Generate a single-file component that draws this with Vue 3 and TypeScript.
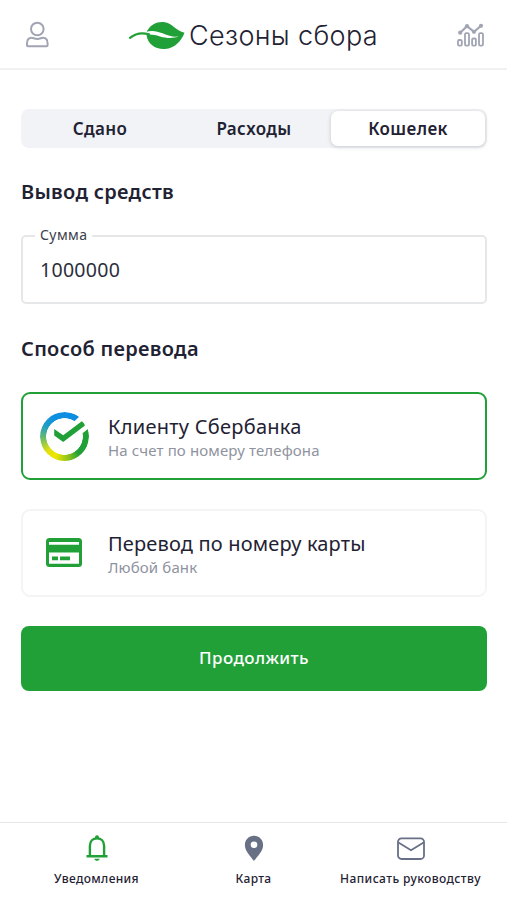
<script setup lang="ts">
import { ref } from 'vue'

type Method = 'sber' | 'card'

const tabs: string[] = ['Сдано', 'Расходы', 'Кошелек']
const activeTab = ref<string>('Кошелек')
const method = ref<Method>('sber')
const amount = ref<string>('1000000')
</script>

<template>
  <div class="screen">
    <header class="header">
      <svg class="user" width="24" height="28" viewBox="0 0 24 28" fill="none" stroke="#a1a5b3" stroke-width="2">
        <circle cx="12.300" cy="8" r="6.300" />
        <path d="M2 24.200v-1.800c0-3.600 2-5.600 4.700-5.600 1.700 0 2.800 1.100 5.600 1.100s3.900-1.100 5.600-1.100c2.700 0 4.700 2 4.700 5.600v1.800c0 .6-.4 1-1 1H3c-.6 0-1-.4-1-1z" />
      </svg>
      <div class="brand">
        <svg width="58" height="30" viewBox="0 0 58 30">
          <path d="M19 11C23 4 30 1 37 2.200c8 1.400 11 8.800 19.500 10.500-3 8-9.500 15.500-19.500 16.300-9.500.7-17-5-18.400-13.300z" fill="#21a038" />
          <path d="M17 12.200c6-2.200 11.500-1.500 17.500 1.100 6.500 2.800 10.500 3.700 16 3.200-6.500 2.200-12 1.600-18.500-.1-6-1.600-10-2.500-15-1.200z" fill="#fff" />
          <path d="M2 17.800C7.500 13.300 14 12.300 21 14.300" fill="none" stroke="#21a038" stroke-width="2.200" stroke-linecap="round" />
        </svg>
        <span class="brand-name">Сезоны сбора</span>
      </div>
      <svg class="stats" width="28" height="26" viewBox="0 0 28 26" fill="none" stroke="#a1a5b3" stroke-width="1.800">
        <path d="M3.200 9.700 10 3.200l7 5.600L24 2.800" stroke-width="2.100" />
        <g fill="#a1a5b3" stroke="none">
          <circle cx="3.200" cy="9.700" r="2.100" /><circle cx="10" cy="3.200" r="2.100" />
          <circle cx="17" cy="8.800" r="2.100" /><circle cx="24" cy="2.800" r="2.100" />
        </g>
        <rect x="1" y="17" width="3.800" height="5.600" rx="1.200" />
        <rect x="8" y="10.200" width="4" height="12.400" rx="1.400" />
        <rect x="15.100" y="15.500" width="3.800" height="7.100" rx="1.200" />
        <rect x="22" y="10.200" width="4" height="12.400" rx="1.400" />
      </svg>
    </header>

    <main class="content">
      <nav class="tabs">
        <button
          v-for="tab in tabs"
          :key="tab"
          type="button"
          class="tab"
          :class="{ active: tab === activeTab }"
          @click="activeTab = tab"
        ><span>{{ tab }}</span></button>
      </nav>

      <h2 class="heading h-withdraw">Вывод средств</h2>
      <label class="field">
        <span class="field-label">Сумма</span>
        <input v-model="amount" class="field-input" type="text" inputmode="numeric" />
      </label>

      <h2 class="heading h-method">Способ перевода</h2>
      <button type="button" class="card" :class="{ selected: method === 'sber' }" @click="method = 'sber'">
        <span class="card-icon">
          <span class="ring"></span>
          <svg class="check" width="50" height="50" viewBox="0 0 50 50">
            <path d="M25 25 34.500 11 41 5 60 0 50 17.200 42.500 23z" fill="#fff" />
            <path d="M15.200 18 24.200 24.300 42.800 10.300Q45 11.800 46 14.600L24.200 31 15.200 24.600z" fill="#21a038" />
          </svg>
        </span>
        <span class="card-text">
          <span class="card-title t-sber">Клиенту Сбербанка</span>
          <span class="card-sub">На счет по номеру телефона</span>
        </span>
      </button>
      <button type="button" class="card second" :class="{ selected: method === 'card' }" @click="method = 'card'">
        <span class="card-icon">
          <svg width="36" height="29" viewBox="0 0 36 29">
            <rect x="0" y="0" width="36" height="29" rx="3.500" fill="#21a038" />
            <path d="M3 4h30v2.800H3zM3 14.500h30v11.200H3z" fill="#fff" />
            <path d="M6 18.600h6v3.600H6zM14 18.600h10v3.600H14z" fill="#21a038" />
          </svg>
        </span>
        <span class="card-text">
          <span class="card-title t-card">Перевод по номеру карты</span>
          <span class="card-sub">Любой банк</span>
        </span>
      </button>

      <button type="button" class="submit"><span>Продолжить</span></button>
    </main>

    <footer class="footer">
      <a class="nav">
        <svg width="24" height="28" viewBox="0 0 24 28">
          <path d="M1.500 22.200h21M4.900 22V12c0-4.700 3-7.600 7.100-7.600s7.100 2.900 7.100 7.600v10" fill="none" stroke="#21a038" stroke-width="2.400" />
          <circle cx="12" cy="3.200" r="2" fill="#21a038" />
          <path d="M9.300 24.700h5.400c-.5 1.400-1.500 2-2.700 2s-2.200-.6-2.700-2z" fill="#21a038" />
        </svg>
        <span>Уведомления</span>
      </a>
      <a class="nav">
        <svg width="24" height="28" viewBox="0 0 24 28">
          <path fill-rule="evenodd" d="M12 1.800c-5.200 0-9.100 4-9.100 9.100C2.900 17.500 9 22.500 12 27c3-4.500 9.100-9.500 9.100-16.100 0-5.100-3.900-9.100-9.100-9.100zm0 5.700a3.300 3.300 0 1 1 0 6.600 3.300 3.300 0 0 1 0-6.600z" fill="#677084" />
        </svg>
        <span>Карта</span>
      </a>
      <a class="nav n-mail">
        <svg width="30" height="28" viewBox="0 0 30 28" fill="none" stroke="#677084" stroke-width="1.800">
          <rect x="2" y="4.300" width="26" height="20.700" rx="3.500" />
          <path d="M2.400 8.600 15 16.200 27.600 8.600" />
        </svg>
        <span>Написать руководству</span>
      </a>
    </footer>
  </div>
</template>

<style>
body {
  margin: 0;
  background: #fff;
}
</style>

<style scoped>
.screen {
  display: flex;
  flex-direction: column;
  box-sizing: border-box;
  width: 507px;
  height: 900px;
  overflow: hidden;
  background: #fff;
  color: #1f2233;
  font-family: 'Noto Sans', sans-serif;
}
button {
  font: inherit;
  color: inherit;
  border: 0;
  padding: 0;
  margin: 0;
  text-align: left;
}
svg {
  display: block;
  flex: none;
}
.header {
  display: flex;
  align-items: center;
  justify-content: space-between;
  box-sizing: border-box;
  height: 70px;
  padding: 0 22px 0 25px;
  border-bottom: 2px solid #f1f1f2;
}
.user {
  margin-top: 2px;
}
.stats {
  margin-top: 4px;
}
.brand {
  display: flex;
  align-items: center;
  gap: 3px;
  margin: 2px 0 0;
}
.brand-name {
  padding-top: 2px;
  font-family: Inter, sans-serif;
  font-weight: 350;
  font-size: 27px;
  line-height: 36px;
  letter-spacing: 0.35px;
  white-space: nowrap;
}
.content {
  display: flex;
  flex-direction: column;
  flex: 1;
  padding: 39px 20px 0 21px;
}
.tabs {
  display: grid;
  grid-template-columns: repeat(3, 1fr);
  box-sizing: border-box;
  height: 39px;
  padding: 2px;
  border-radius: 8px;
  background: #f1f3f6;
}
.tab {
  border-radius: 7px;
  background: transparent;
  text-align: center;
  font-size: 17px;
  line-height: 34px;
  font-weight: 600;
  letter-spacing: 0.4px;
}
.tab.active {
  background: #fff;
  box-shadow: 0 1px 4px rgba(30, 35, 50, 0.2);
}
.heading {
  margin: 0;
  font-size: 20px;
  line-height: 28px;
  font-weight: 600;
  letter-spacing: 0.3px;
}
.h-withdraw {
  margin-top: 30px;
}
.field {
  position: relative;
  display: flex;
  box-sizing: border-box;
  height: 69px;
  margin-top: 29px;
  padding: 0 17px;
  border: 2px solid #e6e7e9;
  border-radius: 5px;
}
.field-label {
  position: absolute;
  left: 12px;
  top: -12px;
  padding: 0 5px;
  background: #fff;
  color: #3b3e4c;
  font-size: 14px;
  line-height: 20px;
  letter-spacing: 0.4px;
}
.field-input {
  width: 100%;
  padding: 0;
  border: 0;
  outline: 0;
  background: transparent;
  color: #2b2e3b;
  font-family: inherit;
  font-size: 19.500px;
  letter-spacing: 0.3px;
}
.h-method {
  margin-top: 31px;
}
.card {
  display: flex;
  align-items: center;
  box-sizing: border-box;
  height: 88px;
  margin-top: 29px;
  padding: 0 16px;
  border: 2px solid #f4f4f6;
  border-radius: 9px;
  background: #fff;
}
.card.selected {
  border-color: #21a038;
}
.card-icon {
  position: relative;
  display: flex;
  align-items: center;
  justify-content: center;
  width: 50px;
  height: 50px;
  margin-right: 19px;
}
.second .card-icon {
  height: 48px;
  margin-bottom: 2px;
}
.ring {
  width: 49px;
  height: 49px;
  border-radius: 50%;
  background: conic-gradient(#0f8fe0 0deg, #0d8de2 35deg, #21a038 60deg, #21a038 140deg, #7fbe20 165deg, #f0e700 205deg, #e0e010 230deg, #63b96f 268deg, #1f9dc8 300deg, #0f8fe0 330deg);
  -webkit-mask: radial-gradient(circle, transparent 18px, #000 18.600px);
  mask: radial-gradient(circle, transparent 18px, #000 18.600px);
}
.check {
  position: absolute;
  left: 0;
  top: 0;
}
.card-text {
  display: flex;
  flex-direction: column;
  padding-top: 4px;
  white-space: nowrap;
}
.card-title {
  font-size: 20px;
  line-height: 24px;
}
.t-sber {
  letter-spacing: 0.26px;
}
.t-card {
  letter-spacing: 0.17px;
}
.card-sub {
  color: #8f93a0;
  font-size: 15px;
  line-height: 22px;
  letter-spacing: 0.13px;
}
.submit {
  height: 65px;
  margin-top: 29px;
  padding-bottom: 2px;
  border-radius: 8px;
  background: #21a038;
  color: #fff;
  text-align: center;
  font-size: 17px;
  font-weight: 500;
  letter-spacing: 0.4px;
}
.footer {
  display: flex;
  box-sizing: border-box;
  height: 78px;
  padding: 11px 17px 0 18px;
  border-top: 1px solid #e5e6e8;
}
.nav {
  display: flex;
  flex-direction: column;
  align-items: center;
  width: 157px;
  gap: 7px;
  font-size: 12px;
  line-height: 20px;
  font-weight: 500;
  letter-spacing: 0.35px;
  white-space: nowrap;
}
.n-mail {
  letter-spacing: 0.42px;
}
</style>
